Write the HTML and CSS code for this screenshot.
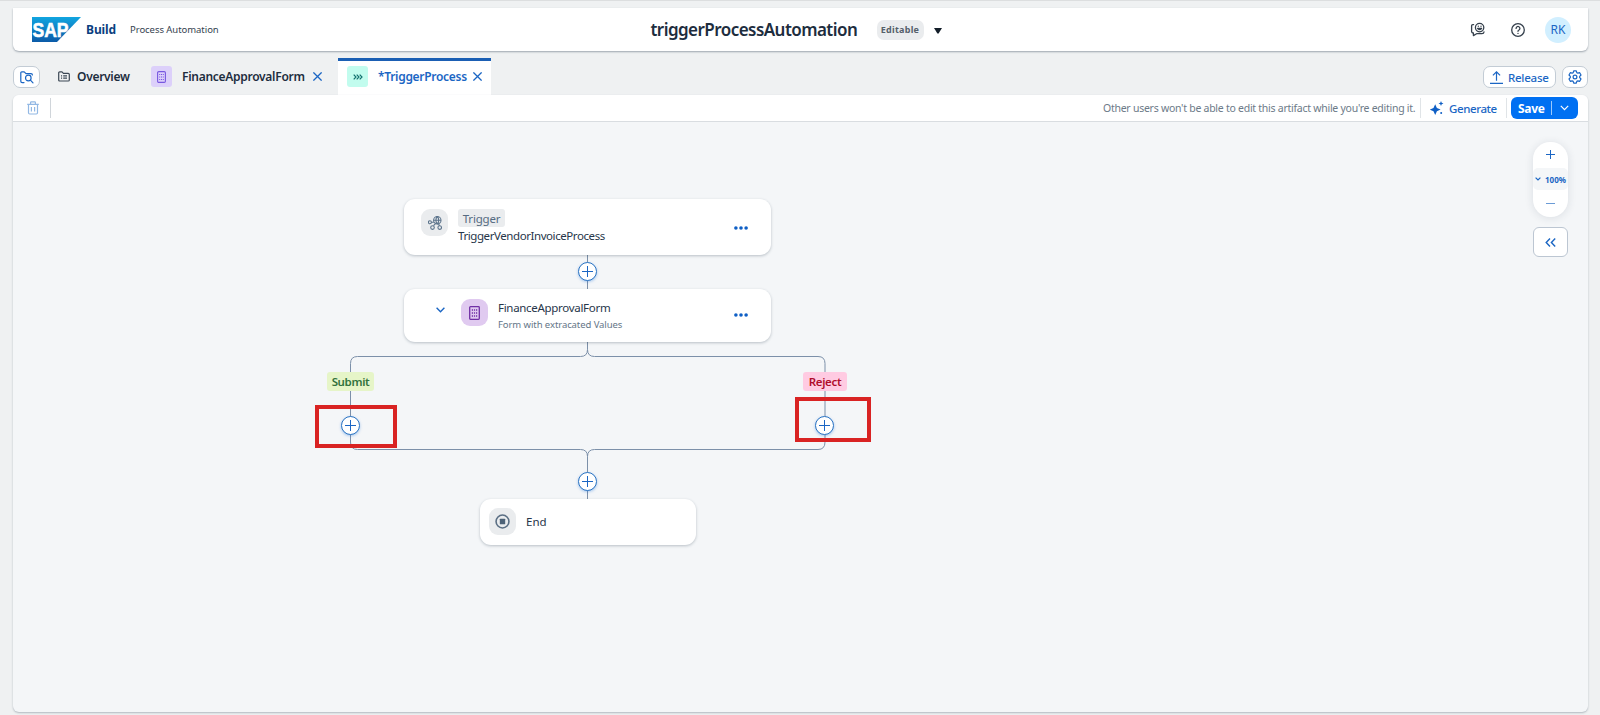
FILE: index.html
```html
<!DOCTYPE html>
<html lang="en">
<head>
<meta charset="utf-8">
<title>triggerProcessAutomation</title>
<link rel="stylesheet" href="styles.css">
</head>
<body>
<div class="app">
  <header class="shell">
    <div class="brand">
      <svg class="logo" width="49" height="25" viewBox="0 0 49 25">
        <defs><linearGradient id="sap" x1="0" y1="0" x2="0" y2="1"><stop offset="0" stop-color="#11a5e0"/><stop offset="1" stop-color="#0b5ba8"/></linearGradient></defs>
        <path d="M0 0H49L25 25H0Z" fill="url(#sap)"/>
        <text class="logo-text" x="0.5" y="20" textLength="36" lengthAdjust="spacingAndGlyphs">SAP</text>
      </svg>
      <span class="build">Build</span>
      <span class="product">Process Automation</span>
    </div>
    <div class="project">
      <h1 class="title">triggerProcessAutomation</h1>
      <span class="badge">Editable</span>
      <svg class="caret" width="8" height="6" viewBox="0 0 8 6"><path d="M0 0H8L4.6 5.4H3.4Z" fill="#131e29"/></svg>
    </div>
    <div class="user">
      <svg width="16" height="16" viewBox="0 0 16 16" fill="none" stroke="#35404c" stroke-width="1.3" stroke-linecap="round" stroke-linejoin="round">
        <circle cx="9.6" cy="5.6" r="4.2"/><path d="M7.6 6.4a2.3 2.3 0 0 0 4 0ZM8.3 4.2v.1M11 4.2v.1"/><path d="M3.6 2.6H2.8Q1.6 2.6 1.6 3.8V9.600Q1.600 11 3 11H3.400V13.600L6.600 11.700H12Q13.800 11.700 14 10"/>
      </svg>
      <svg width="16" height="16" viewBox="0 0 16 16" fill="none" stroke="#35404c" stroke-width="1.3" stroke-linecap="round">
        <circle cx="8" cy="8" r="6.3"/><path d="M6.1 6.4a1.9 1.9 0 1 1 2.9 1.6Q8 8.5 8 9.3"/><path d="M8 11.3v.1"/>
      </svg>
      <span class="avatar">RK</span>
    </div>
  </header>

  <nav class="tabs">
    <button class="icon-btn explorer">
      <svg width="14" height="13" viewBox="0 0 14 13" fill="none" stroke="#1b66c4" stroke-width="1.2" stroke-linecap="round" stroke-linejoin="round"><path d="M4 11.6H2.2Q.8 11.6 .8 10.2V1.8Q.8 .8 1.8 .8H4.2L6 2.6H11Q12.4 2.6 12.4 4"/><circle cx="8.3" cy="7" r="2.8"/><path d="M10.4 9.1L13 11.9"/></svg>
    </button>
    <div class="tab overview">
      <svg width="12" height="11" viewBox="0 0 12 11" fill="none" stroke="#3c4855" stroke-width="1.2" stroke-linejoin="round"><path d="M.7 1.8Q.7 .8 1.7 .8H4L5.4 2.3H10.2Q11.3 2.3 11.3 3.4V8.9Q11.3 10 10.2 10H1.8Q.7 10 .7 8.9Z"/><path d="M3 4.9H4.1M3 7.2H4.1M5.2 4.9H9M5.2 7.2H9"/></svg>
      <span class="tab-text t-overview">Overview</span>
    </div>
    <div class="tab form">
      <span class="tab-icon violet"><svg width="9" height="12" viewBox="0 0 9 12"><rect x=".6" y=".6" width="7.8" height="10.8" rx="1.2" fill="none" stroke="#7858e0" stroke-width="1.1"/><path d="M2.200 3.500H7M2.200 6H7M2.200 8.500H7" stroke="#7858e0" stroke-width="1.2" stroke-dasharray="1 .8"/></svg></span>
      <span class="tab-text t-form">FinanceApprovalForm</span>
      <svg class="close" width="9" height="9" viewBox="0 0 9 9"><path d="M.4 .4L8.600 8.600M8.600 .4L.4 8.600" stroke="#1b66c4" stroke-width="1.3"/></svg>
    </div>
    <div class="tab active">
      <span class="tab-icon mint"><svg width="10" height="6" viewBox="0 0 10 6" fill="none" stroke="#12716f" stroke-width="1.2"><path d="M.7 .6L3 3L.7 5.4M3.7 .6L6 3L3.7 5.4M6.7 .6L9 3L6.7 5.4"/></svg></span>
      <span class="tab-text t-process">*TriggerProcess</span>
      <svg class="close" width="9" height="9" viewBox="0 0 9 9"><path d="M.4 .4L8.600 8.600M8.600 .4L.4 8.600" stroke="#1b66c4" stroke-width="1.3"/></svg>
    </div>
    <div class="tab-actions">
      <button class="release">
        <svg width="13" height="13" viewBox="0 0 13 13" fill="none" stroke="#1b66c4" stroke-width="1.2"><path d="M6.5 9.8V1M2.9 4.4L6.5 .9L10.1 4.4M0 12.3H13"/></svg>
        <span class="t-release">Release</span>
      </button>
      <button class="icon-btn">
        <svg width="14" height="14" viewBox="0 0 14 14" fill="none" stroke="#1b66c4" stroke-width="1.2" stroke-linejoin="round"><path d="M5.7 .8H8.3L8.8 2.6L9.9 3.2L11.7 2.7L13 5L11.7 6.3V7.7L13 9L11.7 11.3L9.9 10.8L8.8 11.4L8.3 13.2H5.7L5.2 11.4L4.1 10.8L2.3 11.3L1 9L2.3 7.7V6.3L1 5L2.3 2.7L4.1 3.2L5.2 2.6Z"/><circle cx="7" cy="7" r="1.9"/></svg>
      </button>
    </div>
  </nav>

  <main class="editor">
    <div class="toolbar">
      <svg class="trash" width="12" height="14" viewBox="0 0 12 14" fill="none" stroke="#92b8e4" stroke-width="1.2"><path d="M.2 3.4H11.8M3.6 3.2V1.5Q3.6 .8 4.3 .8H7.7Q8.4 .8 8.4 1.5V3.2M1.5 3.6V11.8Q1.5 13 2.7 13H9.3Q10.5 13 10.5 11.8V3.6M4.4 6V10.6M7.6 6V10.6"/></svg>
      <span class="rule"></span>
      <span class="notice">Other users won't be able to edit this artifact while you're editing it.</span>
      <span class="rule soft"></span>
      <span class="generate">
        <svg width="14" height="14" viewBox="0 0 14 14" fill="#0f5fc5"><path d="M5.2 3.200L6.900 6.900L10.600 8.600L6.900 10.300L5.2 14L3.500 10.300L-.2 8.600L3.500 6.900Z"/><path d="M11 0L11.7 1.8L13.5 2.5L11.7 3.2L11 5L10.3 3.2L8.5 2.5L10.3 1.8Z"/><circle cx="11.2" cy="12" r="1"/></svg>
        <span class="t-generate">Generate</span>
      </span>
      <span class="rule soft"></span>
      <button class="save"><span class="t-save">Save</span><i class="save-rule"></i><svg width="9" height="6" viewBox="0 0 9 6"><path d="M.8 .8L4.5 4.6L8.2 .8" fill="none" stroke="#fff" stroke-width="1.2"/></svg></button>
    </div>

    <div class="canvas">
      <svg class="wires" width="1575" height="590" viewBox="13 122 1575 590" fill="none" stroke="#7c90a9" stroke-width="1">
        <path d="M587.5 255V289M587.5 342V349.500Q587.5 356.500 580.5 356.500H357.500Q350.500 356.500 350.500 363.500V442Q350.500 449.500 357.500 449.500H580.5Q587.5 449.500 587.5 456.500V499M587.5 349.500Q587.5 356.500 594.5 356.500H818Q825 356.500 825 363.500V442Q825 449.500 818 449.500H594.5Q587.5 449.500 587.5 456.500"/>
      </svg>

      <article class="node trigger">
        <span class="node-icon gray"><svg width="14" height="14" viewBox="0 0 14 14" fill="none" stroke="#5b738b" stroke-width="1.100"><circle cx="9.300" cy="4.200" r="3.700"/><path d="M5.700 4.200H13M9.300 .5C7.400 2.400 7.400 6 9.300 7.900C11.200 6 11.200 2.400 9.300 .5M3.300 6.200H5.800M7.500 7.700L5.500 9.700M10.500 7.800L11.500 9.700"/><circle cx="1.900" cy="6.300" r="1.500"/><circle cx="4.500" cy="11.600" r="1.800"/><circle cx="11.700" cy="11.600" r="1.800"/></svg></span>
        <div class="node-text"><span class="tag">Trigger</span><span class="name t-vendor">TriggerVendorInvoiceProcess</span></div>
        <svg class="more" width="14" height="4" viewBox="0 0 14 4" fill="#0f5fc5"><circle cx="1.900" cy="2" r="1.800"/><circle cx="7" cy="2" r="1.800"/><circle cx="12.100" cy="2" r="1.800"/></svg>
      </article>
      <article class="node approval">
        <svg class="expand" width="9" height="6" viewBox="0 0 9 6"><path d="M.6 .8L4.500 4.700L8.400 .8" fill="none" stroke="#1b66c4" stroke-width="1.400"/></svg>
        <span class="node-icon purple"><svg width="11" height="14" viewBox="0 0 11 14"><rect x=".7" y=".7" width="9.600" height="12.600" rx=".8" fill="none" stroke="#7030a5" stroke-width="1.300"/><path d="M2.800 4H8.600M2.800 7H8.600M2.800 10H8.600" stroke="#7030a5" stroke-width="1.400" stroke-dasharray="1.200 .9"/></svg></span>
        <div class="node-text"><span class="name t-approval">FinanceApprovalForm</span><span class="desc">Form with extracated Values</span></div>
        <svg class="more" width="14" height="4" viewBox="0 0 14 4" fill="#0f5fc5"><circle cx="1.900" cy="2" r="1.800"/><circle cx="7" cy="2" r="1.800"/><circle cx="12.100" cy="2" r="1.800"/></svg>
      </article>
      <article class="node end">
        <span class="node-icon gray"><svg width="15" height="15" viewBox="0 0 14 14"><circle cx="7" cy="7" r="6" fill="none" stroke="#5b6f84" stroke-width="1.500"/><rect x="4.500" y="4.500" width="5" height="5" rx=".5" fill="#4d6277"/></svg></span>
        <span class="name t-end">End</span>
      </article>

      <span class="branch submit">Submit</span>
      <span class="branch reject">Reject</span>

      <i class="add add-top"></i>
      <i class="add add-submit"></i>
      <i class="add add-reject"></i>
      <i class="add add-end"></i>

      <i class="mark mark-submit"></i>
      <i class="mark mark-reject"></i>

      <aside class="controls">
        <div class="zoom">
          <svg width="9" height="9" viewBox="0 0 9 9"><path d="M4.500 0V9M0 4.500H9" stroke="#1b66c4"/></svg>
          <span class="level"><svg width="6" height="4" viewBox="0 0 6 4"><path d="M.6 .6L3 3L5.400 .6" fill="none" stroke="#1b66c4" stroke-width="1.200"/></svg><span class="t-level">100%</span></span>
          <svg width="9" height="9" viewBox="0 0 9 9"><path d="M0 4.500H9" stroke="#6b9bd6"/></svg>
        </div>
        <button class="collapse"><svg width="11" height="9" viewBox="0 0 11 9"><path d="M5 .6L1.200 4.500L5 8.400M10.200 .6L6.400 4.500L10.200 8.400" fill="none" stroke="#1b66c4" stroke-width="1.400"/></svg></button>
      </aside>
    </div>
  </main>
</div>
</body>
</html>
```

FILE: styles.css
```css
* { box-sizing: border-box; }
body { margin: 0; font-family: "Noto Sans", "Open Sans", sans-serif; font-size: 12px; color: #1d2d3e; background: #eff1f2; }
button { font: inherit; padding: 0; margin: 0; }
svg { display: block; flex: none; }
.app { display: flex; flex-direction: column; height: 715px; padding: 7px 12px 3px 13px; border-top: 1px solid #dcdedf; overflow: hidden; }

/* shell bar */
.shell { display: grid; grid-template-columns: 1fr auto 1fr; align-items: center; height: 43px; flex: none; background: #fff; border-radius: 0 0 6px 6px; box-shadow: 0 1px 2px rgba(34, 53, 72, .4); white-space: nowrap; }
.brand { display: flex; align-items: center; padding-left: 19px; }
.logo-text { font: 700 20.5px "Liberation Sans", sans-serif; fill: #fff; stroke: #fff; stroke-width: .6px; }
.build { width: 30px; margin-left: 5px; font-size: 12px; font-weight: 700; color: #0b3f80; letter-spacing: -.1px; }
.product { margin-left: 14px; font-size: 9.5px; color: #35424f; letter-spacing: -.05px; }
.project { display: flex; align-items: center; margin-left: -9px; }
.title { width: 207px; margin: 0; font-size: 17px; font-weight: 600; line-height: 24px; letter-spacing: -.55px; }
.badge { display: grid; place-items: center; width: 47px; height: 20px; margin-left: 19px; border-radius: 7px; background: #eaecee; color: #55606b; font-size: 9px; font-weight: 700; letter-spacing: .25px; }
.caret { margin: 2px 0 0 10px; }
.user { display: flex; align-items: center; justify-content: flex-end; gap: 24px; padding-right: 17px; }
.avatar { display: grid; place-items: center; width: 26px; height: 26px; margin-left: -5px; border-radius: 50%; background: #d1efff; color: #1b66c4; font-size: 12px; }

/* tabs */
.tabs { display: flex; height: 44px; flex: none; align-items: flex-end; }
.icon-btn { display: grid; place-items: center; width: 26px; height: 22px; margin-bottom: 7px; background: #fff; border: 1px solid #c3ccd5; border-radius: 7px; }
.explorer { width: 27px; }
.tab { display: flex; align-items: center; height: 36px; padding-bottom: 1px; white-space: nowrap; }
.tab-text { font-weight: 600; font-size: 12px; }
.overview { margin-left: 18px; }
.t-overview { width: 53px; margin-left: 7px; letter-spacing: -.3px; }
.form { margin-left: 21px; }
.tab-icon { display: grid; place-items: center; width: 21px; height: 21px; border-radius: 3px; }
.violet { background: #dcd0fa; }
.mint { background: #c2fcee; }
.t-form { width: 123px; margin-left: 10px; letter-spacing: -.28px; }
.close { margin-left: 8px; }
.active { width: 153px; height: 37px; padding-left: 9px; padding-bottom: 3px; margin-left: 16px; background: #fff; border-top: 3px solid #1b5fb4; color: #1b66c4; }
.t-process { width: 87px; margin-left: 10px; letter-spacing: -.3px; }
.tab-actions { display: flex; gap: 6px; margin-left: auto; color: #1b66c4; }
.release { display: flex; align-items: center; width: 73px; height: 22px; padding-left: 6px; background: #fff; border: 1px solid #c3ccd5; border-radius: 7px; color: #1b66c4; font-size: 11.5px; font-weight: 500; }
.t-release { margin-left: 5px; letter-spacing: -.25px; }

/* editor */
.editor { display: flex; flex-direction: column; flex: 1; border-radius: 6px; background: #f4f6f8; box-shadow: 0 1px 2px rgba(34, 53, 72, .3); }
.toolbar { display: flex; align-items: center; height: 27px; flex: none; padding: 0 10px 0 14px; background: #fff; border-bottom: 1px solid #d9dde1; border-radius: 6px 6px 0 0; white-space: nowrap; }
.rule { width: 1px; height: 20px; margin-left: 11px; background: #d0d5da; }
.rule.soft { margin-left: 4px; background: #e0e4e7; }
.notice { width: 313px; margin-left: auto; font-size: 10.500px; color: #6c7a88; letter-spacing: -.26px; }
.generate { display: flex; align-items: center; width: 81px; padding-left: 9px; color: #1b66c4; font-weight: 500; font-size: 11.5px; }
.t-generate { margin-left: 5px; letter-spacing: -.4px; }
.save { display: flex; align-items: center; width: 67px; height: 22px; margin-left: 4px; padding-left: 7px; border: 0; border-radius: 6px; background: #0070f2; color: #fff; font-weight: 700; }
.t-save { width: 27px; letter-spacing: -.3px; text-align: left; }
.save-rule { width: 1px; height: 14px; margin: 0 8px 0 6px; background: #9cc8fb; }

/* flow diagram */
.canvas { position: relative; flex: 1; }
.wires { position: absolute; inset: 0; }
.node { position: absolute; display: flex; align-items: flex-start; background: #fff; border-radius: 11px; box-shadow: 0 1px 3px rgba(34, 53, 72, .28); white-space: nowrap; }
.trigger { left: 391px; top: 77px; width: 367px; height: 56px; padding: 10px 23px 0 17px; }
.approval { left: 391px; top: 167px; width: 367px; height: 53px; padding: 10px 23px 0 32px; }
.end { left: 467px; top: 377px; width: 216px; height: 46px; padding: 9px; }
.node-icon { display: grid; place-items: center; width: 27px; height: 27px; border-radius: 9px; flex: none; }
.gray { background: #eaecee; }
.purple { background: #e0caf0; margin-left: 16px; }
.node-text { display: flex; flex-direction: column; align-items: flex-start; margin-left: 10px; }
.tag { display: grid; place-items: center; width: 47px; height: 18px; border-radius: 3px; background: #eaecee; color: #556b81; font-size: 11.500px; line-height: 17px; letter-spacing: -.2px; }
.name { font-size: 11.5px; line-height: 18px; color: #27364a; letter-spacing: -.42px; }
.t-approval { letter-spacing: -.3px; }
.desc { font-size: 9.5px; line-height: 15px; color: #647587; letter-spacing: -.08px; }
.more { margin: 17px 0 0 auto; }
.approval .more { margin-top: 14px; }
.expand { margin-top: 8px; }
.t-end { margin: 5px 0 0 10px; letter-spacing: 0; }
.branch { position: absolute; top: 250px; display: grid; place-items: center; height: 19px; padding-bottom: 1px; border-radius: 3px; font-size: 11.500px; font-weight: 600; }
.submit { left: 314px; width: 47px; background: #e6f5c8; color: #32733c; letter-spacing: -.35px; }
.reject { left: 790px; width: 44px; background: #ffcbe2; color: #b00d2c; letter-spacing: -.3px; }
.add { position: absolute; width: 19px; height: 19px; border: 1.500px solid #2a73c2; border-radius: 50%; background: linear-gradient(#1b66c4, #1b66c4) center / 11px 1px no-repeat, linear-gradient(#1b66c4, #1b66c4) center / 1px 11px no-repeat, #fff; box-shadow: 0 1px 3px rgba(0, 100, 217, .35); }
.add-top { left: 565px; top: 140px; }
.add-submit { left: 328px; top: 294px; }
.add-reject { left: 802px; top: 294px; }
.add-end { left: 565px; top: 350px; }
.mark { position: absolute; border: 4px solid #d92323; }
.mark-submit { left: 302px; top: 283px; width: 82px; height: 43px; }
.mark-reject { left: 782px; top: 275px; width: 76px; height: 45px; }

/* canvas controls */
.controls { position: absolute; right: 20px; top: 20px; display: flex; flex-direction: column; gap: 10px; width: 35px; }
.zoom { display: flex; flex-direction: column; align-items: center; justify-content: space-between; height: 75px; padding: 8px 0 9px; border-radius: 17px; background: #fff; box-shadow: 0 1px 8px rgba(34, 53, 72, .12); }
.level { display: flex; align-items: center; justify-content: center; gap: 4px; width: 35px; height: 22px; border-radius: 5px; background: #f4f6f8; color: #1b66c4; }
.t-level { font-size: 8px; font-weight: 700; letter-spacing: 0; }
.collapse { display: grid; place-items: center; width: 35px; height: 30px; border: 1px solid #bcc6d2; border-radius: 6px; background: #fff; }
```
